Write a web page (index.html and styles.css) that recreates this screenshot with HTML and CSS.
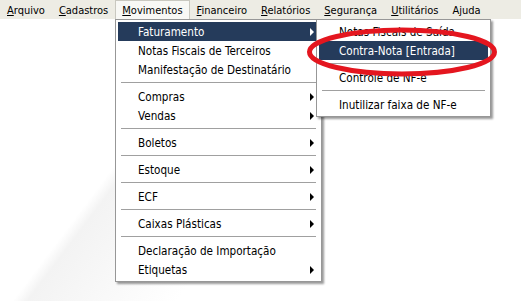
FILE: index.html
```html
<!DOCTYPE html>
<html lang="pt-BR">
<head>
    <meta charset="UTF-8">
    <title>Movimentos</title>
    <link rel="stylesheet" href="styles.css">
</head>
<body>
    <div class="menubar">
        <span class="top-item"><u>A</u>rquivo</span>
        <span class="top-item"><u>C</u>adastros</span>
        <span class="top-item open"><u>M</u>ovimentos</span>
        <span class="top-item"><u>F</u>inanceiro</span>
        <span class="top-item"><u>R</u>elatórios</span>
        <span class="top-item"><u>S</u>egurança</span>
        <span class="top-item"><u>U</u>tilitários</span>
        <span class="top-item">Ajuda</span>
    </div>

    <div class="menu main-menu">
        <div class="item active">Faturamento<i class="arrow"></i></div>
        <div class="item">Notas Fiscais de Terceiros</div>
        <div class="item">Manifestação de Destinatário</div>
        <div class="sep"></div>
        <div class="item">Compras<i class="arrow"></i></div>
        <div class="item">Vendas<i class="arrow"></i></div>
        <div class="sep"></div>
        <div class="item">Boletos<i class="arrow"></i></div>
        <div class="sep"></div>
        <div class="item">Estoque<i class="arrow"></i></div>
        <div class="sep"></div>
        <div class="item">ECF<i class="arrow"></i></div>
        <div class="sep"></div>
        <div class="item">Caixas Plásticas<i class="arrow"></i></div>
        <div class="sep"></div>
        <div class="item">Declaração de Importação</div>
        <div class="item">Etiquetas<i class="arrow"></i></div>
    </div>

    <div class="menu sub-menu">
        <div class="item">Notas Fiscais de Saída</div>
        <div class="item active">Contra-Nota [Entrada]</div>
        <div class="sep"></div>
        <div class="item">Controle de NF-e</div>
        <div class="sep"></div>
        <div class="item">Inutilizar faixa de NF-e</div>
    </div>

    <!-- marcação vermelha -->
    <svg class="mark" width="210" height="60" viewBox="0 0 210 60">
        <ellipse cx="102" cy="27" rx="92.5" ry="22" fill="none" stroke="#e4161f" stroke-width="5"/>
    </svg>
</body>
</html>
```

FILE: styles.css
```css
body {
    margin: 0;
    width: 521px;
    height: 301px;
    overflow: hidden;
    font-family: "DejaVu Sans Condensed", "DejaVu Sans", sans-serif;
    font-stretch: semi-condensed;
    font-size: 11px;
    color: #000;
    background: linear-gradient(127deg, #fff 0%, #fff 32%, #f3f3f3 34%, #f9f9f9 44%, #fff 54%, #fff 100%);
}
.menubar {
    display: flex;
    height: 19px;
    background-color: #edece4;
}
.top-item {
    padding: 0 6px;
    line-height: 19px;
    box-sizing: border-box;
    border: 1px solid transparent;
    border-bottom: none;
}
.top-item.open {
    background-color: #f8f8f5;
    border-color: #c9c8c0;
}
.menu {
    position: absolute;
    background-color: #fff;
    border: 1px solid #979797;
    padding: 2px;
    font-size: 11.6px;
    box-shadow: 2px 2px 2px rgba(0, 0, 0, 0.4);
}
.main-menu {
    left: 115px;
    top: 19px;
    width: 201px;
}
.sub-menu {
    left: 316px;
    top: 19px;
    width: 169px;
}
.item {
    display: flex;
    align-items: center;
    justify-content: space-between;
    height: 19px;
    padding: 0 5px 0 20px;
    white-space: nowrap;
}
.item.active {
    background-color: #253b5b;
    color: #fff;
}
.arrow {
    width: 0;
    height: 0;
    border-left: 4px solid #000;
    border-top: 4px solid transparent;
    border-bottom: 4px solid transparent;
}
.item.active .arrow {
    border-left-color: #fff;
}
.sep {
    height: 1px;
    margin: 3px 3px 4px;
    background-color: #a0a0a0;
}
.mark {
    position: absolute;
    left: 300px;
    top: 25px;
}
```
